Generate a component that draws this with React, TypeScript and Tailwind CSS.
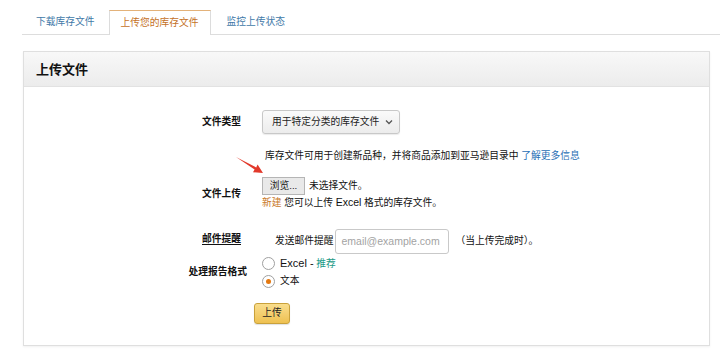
import React from "react"

const font = { fontFamily: '"Liberation Sans", "Noto Sans CJK SC", sans-serif' }

function Radio({ checked }: { checked?: boolean }) {
  return (
    <span className="flex h-[13px] w-[13px] items-center justify-center rounded-full border border-[#a0a0a0] bg-white">
      {checked && <span className="h-[5px] w-[5px] rounded-full bg-[#e47911]" />}
    </span>
  )
}

export default function App() {
  return (
    <div className="relative h-[360px] w-[720px] overflow-hidden bg-white text-[9.75px] text-[#111]" style={font}>
      {/* tabs */}
      <div className="ml-[22px] mt-[10px] flex h-[25px] items-end border-b border-[#dddddd]">
        <div className="flex h-[24px] items-center px-[14px] text-[#3f79a8]">下载库存文件</div>
        <div className="-mb-px flex h-[25px] items-center border-x border-t border-[#dcdcdc] border-t-[#e3b27a] bg-white px-[11px] text-[#c4711f]">
          上传您的库存文件
        </div>
        <div className="flex h-[24px] items-center px-[16px] text-[#3f79a8]">监控上传状态</div>
      </div>

      {/* panel */}
      <div className="ml-[23px] mr-[10px] mt-[16px] border border-[#dfdfdf] shadow-[0_1px_2px_rgba(0,0,0,0.06)]">
        <div className="flex h-[35px] items-center border-b border-[#e2e2e2] bg-gradient-to-b from-[#f8f8f8] to-[#ececec] pl-[12px] pt-[1px] text-[13px] font-bold">
          上传文件
        </div>

        <div className="flex flex-col pb-[21px] pt-[23px]">
          {/* file type */}
          <div className="flex items-center">
            <div className="w-[217px] text-right font-bold">文件类型</div>
            <div className="ml-[21px] flex h-[24px] items-center gap-[6px] rounded-[3px] border border-[#c8c8c8] bg-gradient-to-b from-[#fafafa] to-[#ececec] pl-[9px] pr-[6px] text-[#222] shadow-[0_1px_1px_rgba(0,0,0,0.08)]">
              用于特定分类的库存文件
              <svg width="8" height="6" viewBox="0 0 8 6">
                <path d="M1 1.5 L4 4.5 L7 1.5" fill="none" stroke="#555" strokeWidth="1.3" />
              </svg>
            </div>
          </div>

          {/* info */}
          <div className="mt-[16px] flex">
            <div className="w-[217px]" />
            <div className="ml-[24px] leading-[12px]">
              库存文件可用于创建新品种，并将商品添加到亚马逊目录中 <span className="text-[#1f6fb5]">了解更多信息</span>
            </div>
          </div>

          {/* file upload */}
          <div className="mt-[15px] flex items-center">
            <div className="w-[217px] pt-[2px] text-right font-bold">文件上传</div>
            <div className="ml-[21px] flex flex-col">
              <div className="flex items-center gap-[4px]">
                <span className="flex h-[18px] w-[43px] items-center justify-center border border-[#b5b5b5] bg-[#e9e9e9] text-[#222]">
                  浏览...
                </span>
                <span>未选择文件。</span>
              </div>
              <div className="mt-px leading-[12px]">
                <span className="text-[#c9782a]">新建</span> 您可以上传 <span className="text-[10.5px]">Excel</span> 格式的库存文件。
              </div>
            </div>
          </div>

          {/* email */}
          <div className="mt-[20px] flex items-center">
            <div className="w-[217px] pb-[5px] text-right font-bold underline underline-offset-2">邮件提醒</div>
            <div className="ml-[34px] flex items-center">
              <span>发送邮件提醒</span>
              <span className="ml-[1px] flex h-[25px] w-[114px] items-center rounded-[3px] border border-[#c9c9c9] px-[6px] text-[10.5px] text-[#a3a3a3]">
                email@example.com
              </span>
              <span className="ml-[7px]">（当上传完成时）。</span>
            </div>
          </div>

          {/* report format */}
          <div className="flex items-center">
            <div className="w-[223px] text-right font-bold">处理报告格式</div>
            <div className="ml-[15px] flex flex-col">
              <div className="flex h-[18px] items-center gap-[5px]">
                <Radio />
                <span>
                  <span className="text-[11px]">Excel -</span> <span className="text-[#1d9a87]">推荐</span>
                </span>
              </div>
              <div className="flex h-[18px] items-center gap-[5px]">
                <Radio checked />
                <span>文本</span>
              </div>
            </div>
          </div>

          {/* submit */}
          <div className="mt-[13px] flex">
            <div className="w-[217px]" />
            <div className="ml-[13px] flex h-[21px] w-[36px] items-center justify-center rounded-[3px] border border-[#c9a13b] bg-gradient-to-b from-[#f9dd8c] to-[#eec150] text-[#222] shadow-[0_1px_1px_rgba(0,0,0,0.12)]">
              上传
            </div>
          </div>
        </div>
      </div>

      {/* red arrow annotation */}
      <svg className="absolute left-[230px] top-[150px]" width="40" height="30" viewBox="0 0 40 30">
        <path d="M6 7 L26.2 17.4 L27.6 14.5 L33 23 L23 22.3 L24.6 19.6 Z" fill="#e2392b" />
      </svg>
    </div>
  )
}
